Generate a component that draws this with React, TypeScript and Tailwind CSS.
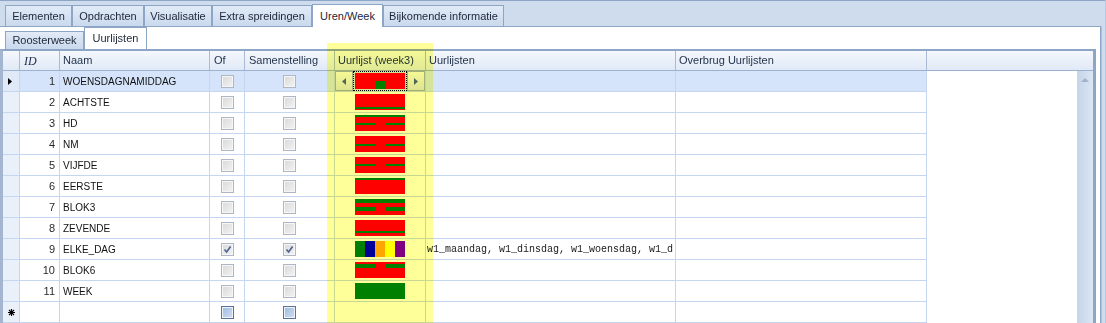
import React from 'react'

type Seg = { x: number; y: number; w: number; h: number; c?: string }

const full = (y: number, h: number): Seg[] => [{ x: 0, y, w: 50, h }]
const noWed = (y: number, h: number): Seg[] => [
  { x: 0, y, w: 20, h },
  { x: 30, y, w: 20, h },
]

// the column highlight is multiplied over the cells, so blue channels are pre-lifted
const rows: { id: number; naam: string; bar: Seg[]; checked?: boolean; lijst?: string }[] = [
  { id: 1, naam: 'WOENSDAGNAMIDDAG', bar: [{ x: 20, y: 8, w: 10, h: 8 }] },
  { id: 2, naam: 'ACHTSTE', bar: full(13, 2) },
  { id: 3, naam: 'HD', bar: [...full(0, 2), ...noWed(8, 2)] },
  { id: 4, naam: 'NM', bar: noWed(8, 2) },
  { id: 5, naam: 'VIJFDE', bar: noWed(7, 2) },
  { id: 6, naam: 'EERSTE', bar: full(0, 2) },
  { id: 7, naam: 'BLOK3', bar: [...full(0, 4), ...noWed(8, 4)] },
  { id: 8, naam: 'ZEVENDE', bar: full(11, 2) },
  {
    id: 9,
    naam: 'ELKE_DAG',
    checked: true,
    lijst: 'w1_maandag, w1_dinsdag, w1_woensdag, w1_d',
    bar: [
      { x: 0, y: 0, w: 10, h: 16, c: '#008000' },
      { x: 10, y: 0, w: 10, h: 16, c: '#0000ff' },
      { x: 20, y: 0, w: 10, h: 16, c: '#ffa500' },
      { x: 30, y: 0, w: 10, h: 16, c: '#ffff00' },
      { x: 40, y: 0, w: 10, h: 16, c: '#8000d5' },
    ],
  },
  { id: 10, naam: 'BLOK6', bar: noWed(2, 4) },
  { id: 11, naam: 'WEEK', bar: full(0, 16) },
]

const mainTabs = [
  { label: 'Elementen', w: 'w-[67px]' },
  { label: 'Opdrachten', w: 'w-[72px]' },
  { label: 'Visualisatie', w: 'w-[68px]' },
  { label: 'Extra spreidingen', w: 'w-[100px]' },
  { label: 'Uren/Week', w: 'w-[71px]', active: true },
  { label: 'Bijkomende informatie', w: 'w-[121px]' },
]

function Bar({ segs }: { segs: Seg[] }) {
  return (
    <svg width="50" height="16" className="block">
      <rect x="0" y="0" width="50" height="16" fill="#ff0000" />
      {segs.map((s, i) => (
        <rect key={i} x={s.x} y={s.y} width={s.w} height={s.h} fill={s.c ?? '#008000'} />
      ))}
    </svg>
  )
}

function Check({ checked, fresh }: { checked?: boolean; fresh?: boolean }) {
  if (fresh) {
    return (
      <span className="w-[13px] h-[13px] border border-[#5a7299] bg-linear-to-br from-[#9db9df] to-[#d2e0f2] shadow-[inset_0_0_0_1px_#eef3fa]" />
    )
  }
  return (
    <span className="w-[13px] h-[13px] border border-[#aeb7c4] bg-linear-to-br from-[#d9d9d9] to-[#f3f3f3] shadow-[inset_0_0_0_1px_#f6f6f6] flex items-center justify-center">
      {checked && (
        <svg width="11" height="11" viewBox="0 0 11 11">
          <path d="M2.5 5.5 L4.6 8 L8.6 2.5" stroke="#4a6290" strokeWidth="1.6" fill="none" />
        </svg>
      )}
    </span>
  )
}

function Arrow({ dir }: { dir: 'l' | 'r' }) {
  return (
    <span className="w-[18px] h-full border border-[#a2b0c4] bg-linear-to-b from-[#f6f8fb] to-[#dde4ee] flex items-center justify-center">
      <svg width="4" height="7" viewBox="0 0 4 7">
        <path d={dir === 'l' ? 'M4 0 L0 3.5 L4 7 Z' : 'M0 0 L4 3.5 L0 7 Z'} fill="#51668a" />
      </svg>
    </span>
  )
}

const line = 'border-r border-[#c5d7f0]'

function Row({ r }: { r: (typeof rows)[number] }) {
  const sel = r.id === 1
  return (
    <div className={`flex h-[21px] border-b border-[#c5d7f0] ${sel ? 'bg-[#d5e4fa]' : 'bg-white'}`}>
      <div className={`w-[17px] shrink-0 ${line} ${sel ? 'bg-[#dfe9f7]' : 'bg-[#e9f0fa]'} flex items-center justify-center`}>
        {sel && (
          <svg width="4" height="7" viewBox="0 0 4 7" className="ml-[-2px]">
            <path d="M0 0 L4 3.5 L0 7 Z" fill="#000" />
          </svg>
        )}
      </div>
      <div className={`w-[40px] shrink-0 ${line} flex items-center justify-end pr-[4px] text-[11px] text-[#2a2a2a]`}>{r.id}</div>
      <div className={`w-[150px] shrink-0 ${line} flex items-center pl-[3px] text-[10px] text-[#111]`}>{r.naam}</div>
      <div className={`w-[35px] shrink-0 ${line} flex items-center justify-center pl-px`}>
        <Check checked={r.checked} />
      </div>
      <div className={`w-[90px] shrink-0 ${line} flex items-center justify-center`}>
        <Check checked={r.checked} />
      </div>
      <div className={`w-[91px] shrink-0 ${line} flex items-center justify-center`}>
        {sel ? (
          <div className="flex h-full w-full">
            <Arrow dir="l" />
            <div className="flex-1 border border-dotted border-black flex items-center justify-center">
              <Bar segs={r.bar} />
            </div>
            <Arrow dir="r" />
          </div>
        ) : (
          <Bar segs={r.bar} />
        )}
      </div>
      <div className={`w-[250px] shrink-0 ${line} flex items-center pl-px overflow-hidden whitespace-nowrap font-['Liberation_Mono',monospace] text-[10px] text-[#1a1a1a]`}>
        {r.lijst}
      </div>
      <div className={`w-[251px] shrink-0 ${line}`} />
    </div>
  )
}

export default function App() {
  const head = 'shrink-0 border-r border-[#a9bbd4] flex items-center text-[11px] text-[#1f2f49]'
  return (
    <div className="relative w-[1106px] h-[323px] overflow-hidden bg-[#cfdced] font-['Liberation_Sans',Arial,sans-serif] border-r border-[#b9c8dc]">
      <div className="h-px bg-[#8ea6c6]" />

      {/* main tabs */}
      <div className="flex items-end h-[25px] pl-[5px]">
        {mainTabs.map((t) =>
          t.active ? (
            <div
              key={t.label}
              className={`${t.w} h-[23px] mb-[-1px] relative z-10 bg-white border border-b-0 border-[#8ea6c6] flex items-center justify-center text-[11px] text-[#1c2638]`}
            >
              {t.label}
            </div>
          ) : (
            <div
              key={t.label}
              className={`${t.w} h-[21px] bg-linear-to-b from-[#e2ebf7] to-[#cad9ee] border border-b-0 border-[#8ea6c6] flex items-center justify-center text-[11px] text-[#1c2638]`}
            >
              {t.label}
            </div>
          )
        )}
      </div>

      {/* panel */}
      <div className="w-[1101px] h-[300px] bg-white border-t border-r border-[#8ea6c6] shadow-[1px_0_0_#b3c1d5]">
        <div className="flex items-end h-[22px] pl-[5px]">
          <div className="w-[79px] h-[18px] bg-linear-to-b from-[#e2ebf7] to-[#cad9ee] border border-b-0 border-[#8ea6c6] flex items-center justify-center text-[11px] text-[#1c2638]">
            Roosterweek
          </div>
          <div className="w-[63px] h-[22px] bg-white border border-b-0 border-[#8ea6c6] flex items-center justify-center text-[11px] text-[#1c2638]">
            Uurlijsten
          </div>
        </div>

        {/* grid */}
        <div className="w-[1096px] h-[300px] border-t-2 border-l-[3px] border-r-[3px] border-[#8ea6c6] border-l-[#a3b5cf] flex flex-col">
          <div className="flex h-[20px] border-b border-[#9db2cf] bg-linear-to-b from-[#f5f8fd] to-[#e0e9f6]">
            <div className={`${head} w-[17px]`} />
            <div className={`${head} w-[40px] pl-[4px] font-['Liberation_Serif',serif] italic text-[12px] text-[#1e3a6a]`}>ID</div>
            <div className={`${head} w-[150px] pl-[3px]`}>Naam</div>
            <div className={`${head} w-[35px] pl-[4px]`}>Of</div>
            <div className={`${head} w-[90px] pl-[4px]`}>Samenstelling</div>
            <div className={`${head} w-[91px] pl-[3px]`}>Uurlijst (week3)</div>
            <div className={`${head} w-[250px] pl-[3px]`}>Uurlijsten</div>
            <div className={`${head} w-[251px] pl-[3px]`}>Overbrug Uurlijsten</div>
            <div className="flex-1" />
          </div>

          <div className="flex flex-1">
            <div className="w-[924px] shrink-0">
              {rows.map((r) => (
                <Row key={r.id} r={r} />
              ))}
              <div className="flex h-[21px] border-b border-[#c5d7f0] bg-white">
                <div className={`w-[17px] shrink-0 ${line} bg-[#e9f0fa] flex items-center justify-center`}>
                  <svg width="7" height="7" viewBox="0 0 7 7">
                    <path d="M3.5 0 V7 M0 3.5 H7 M1 1 L6 6 M6 1 L1 6" stroke="#000" strokeWidth="1.1" />
                  </svg>
                </div>
                <div className={`w-[40px] shrink-0 ${line}`} />
                <div className={`w-[150px] shrink-0 ${line}`} />
                <div className={`w-[35px] shrink-0 ${line} flex items-center justify-center pl-px`}>
                  <Check fresh />
                </div>
                <div className={`w-[90px] shrink-0 ${line} flex items-center justify-center`}>
                  <Check fresh />
                </div>
                <div className={`w-[91px] shrink-0 ${line}`} />
                <div className={`w-[250px] shrink-0 ${line}`} />
                <div className={`w-[251px] shrink-0 ${line}`} />
              </div>
            </div>
            <div className="flex-1 bg-white" />
            <div className="w-[16px] shrink-0 bg-linear-to-r from-[#c4d4e9] to-[#dbe6f3] flex justify-center pt-[7px]">
              <svg width="8" height="4" viewBox="0 0 8 4">
                <path d="M0 4 L4 0 L8 4 Z" fill="#a1b2ca" />
              </svg>
            </div>
          </div>
        </div>
      </div>

      {/* column highlight */}
      <div className="absolute left-[327px] top-[43px] w-[106px] bottom-0 bg-[#ffff99] mix-blend-multiply pointer-events-none" />
    </div>
  )
}
